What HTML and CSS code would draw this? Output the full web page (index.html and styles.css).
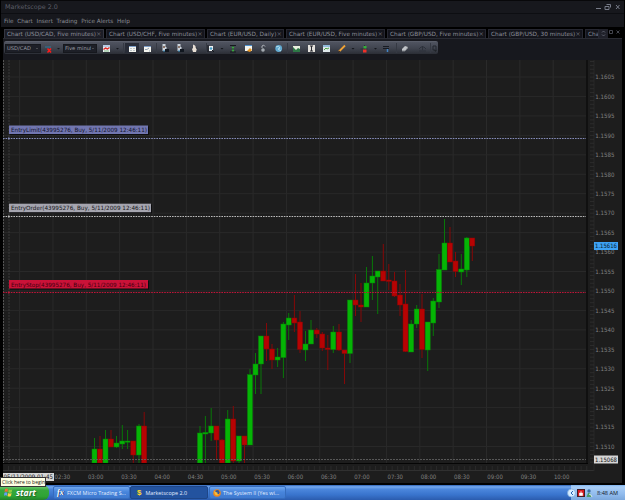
FILE: index.html
```html
<!DOCTYPE html>
<html lang="en">
<head>
<meta charset="utf-8">
<title>Marketscope 2.0</title>
<link rel="stylesheet" href="styles.css">
</head>
<body>
<div class="screen">
  <header class="titlebar"><span class="title">Marketscope 2.0</span>
    <svg class="winbtns" width="26" height="8" viewBox="0 0 26 8"><path d="M1 5.5h5M11.5 1.5h4v3M10 3.5h4v3h-4zM21 2l3.5 4M24.5 2L21 6" fill="none" stroke="#777b88" stroke-width="1"/></svg>
  </header>
  <nav class="menu"><span>File</span><span>Chart</span><span>Insert</span><span>Trading</span><span>Price Alerts</span><span>Help</span></nav>
  <div class="tabs">
    <div class="tab on t1"><span>Chart (USD/CAD, Five minutes)</span><i>×</i></div>
    <div class="tab t2"><span>Chart (USD/CHF, Five minutes)</span><i>×</i></div>
    <div class="tab t3"><span>Chart (EUR/USD, Daily)</span><i>×</i></div>
    <div class="tab t4"><span>Chart (EUR/USD, Five minutes)</span><i>×</i></div>
    <div class="tab t5"><span>Chart (GBP/USD, Five minutes)</span><i>×</i></div>
    <div class="tab t6"><span>Chart (GBP/USD, 30 minutes)</span><i>×</i></div>
    <div class="tab t7"><span>Cha</span></div>
    <svg class="tabbtns" width="24" height="9" viewBox="0 0 24 9"><rect width="9" height="9" fill="#20212a"/><path d="M3 3.5L4.500 2L6 3.5M3 5.500L4.500 7L6 5.500" fill="none" stroke="#686c7a" stroke-width=".8"/><path d="M10.500 1.500h3v3h-3zM17.500 1.500l3 3M20.500 1.500l-3 3" fill="none" stroke="#4b4d57" stroke-width=".9"/></svg>
  </div>
  <div class="toolrow">
    <div class="toolbar">
      <div class="select pair"><span>USD/CAD</span><b></b></div>
      <svg class="remove" width="20" height="12" viewBox="44 41 20 12"><path d="M45 46h6" stroke="#376078" stroke-width="2"/><path d="M47.500 47.500l3.500 4M51 47.500l-3.500 4" stroke="#ff1a1a" stroke-width="1.500"/><path d="M57 47h3l-1.500 1.500z" fill="#15171c"/></svg>
      <div class="select frame"><span>Five minute</span><b></b></div>
      <svg class="icons" width="341" height="12" viewBox="97 41 341 12">
        <path d="M123.500 42v10M156.500 42v10M206.500 42v10M287.500 42v10M396.500 42v10M430.500 42v10" stroke="#353943"/>
        <rect x="125" y="42" width="14" height="10" fill="#282c37"/>
        <g fill="#15171c"><path d="M116 47h3l-1.500 1.500zM220.500 47h3l-1.500 1.500zM351.500 47h3l-1.500 1.500zM374 47h3l-1.500 1.500z"/></g>
        <rect x="103" y="44" width="7" height="7" fill="#e9edf2"/><path d="M103 45h7" stroke="#84a8d2"/><path d="M103.500 48.500l2-1.500 2 1 2-1.500" fill="none" stroke="#e12a24" stroke-width="1.400"/><path d="M104 50h5" stroke="#56ab5a" stroke-width=".7"/>
        <rect x="129" y="45" width="7" height="6" fill="#f4f5f0"/><path d="M129 45.500h7" stroke="#7b9dc8"/><path d="M130 47.500h2m1 0h2M130 49.500h2m1 0h2" stroke="#a3afb6" stroke-width=".7"/>
        <rect x="144" y="45" width="7" height="6" fill="#f4f5f0"/><path d="M144 45.500h7" stroke="#7b9dc8"/><path d="M145 48.500h2l2-1.500m0 3h1" stroke="#7b8fa3" stroke-width=".8" fill="none"/>
        <path d="M162.500 43h3v3h1v4h-4zM177.500 43h3v3h1v4h-4z" fill="#cbd3dc"/><path d="M163 45h2v2h-2zM178 45h2v2h-2z" fill="#8b7569"/><path d="M165 48h4v3h-4zM180 48h4v3h-4z" fill="#111720"/><path d="M163 50h2M178 50h2" stroke="#2d83b4"/>
        <path d="M193 43.500l2 1 1 2 1 .5-1 4h-3l-1-3 1-1z" fill="#e8dfd5"/><path d="M196 46l1 2" stroke="#272b33"/>
        <path d="M208 44v7" stroke="#15171c"/><rect x="209" y="45" width="4" height="5" fill="#edf0f2"/><circle cx="211" cy="47.500" r="1.300" fill="#429bc7"/><path d="M212 49l2 2" stroke="#15171c"/>
        <path d="M230 44.500h6M230 51h6M233 45v6" stroke="#15181d"/><path d="M233 45l1.500 2h-1v2h1l-1.500 2-1.500-2h1v-2h-1z" fill="#3da941"/>
        <rect x="245" y="44" width="7" height="6" fill="#f3f4ef"/><path d="M245 44.500h7" stroke="#4d92d0"/><path d="M247 50l3-3 2 2-2 2z" fill="#e99625"/>
        <circle cx="263" cy="49" r="2.300" fill="#a4aab1" stroke="#30343c"/><path d="M262 47v-2q2-2 3 .5" stroke="#aeb2b8" fill="none"/>
        <circle cx="278.700" cy="47.500" r="3.400" fill="#63abd2"/><path d="M276 46q3-2 4 1l-2 1 3 2" fill="none" stroke="#b2ddec"/>
        <rect x="293" y="45" width="7" height="6" fill="#e9efdf"/><path d="M293 46l3 3 2-2 2 1v3h-7z" fill="#2d7846"/>
        <path d="M308 44h7v7h-7z" fill="#e3e0dc"/><path d="M311.500 45v5M310 45h3M310 50h3" stroke="#262830"/>
        <rect x="323" y="44" width="7" height="7" fill="#dee7eb"/><path d="M323 45h7" stroke="#438cc6"/><path d="M324 49l2-2 1 1 2-1" stroke="#52a646" fill="none"/>
        <path d="M339 50.500l6-6" stroke="#f0a235" stroke-width="1.800"/><path d="M338.500 51l1.500-1" stroke="#291d18"/>
        <path d="M360.500 48h7M364.500 44v7" stroke="#2b3038"/><rect x="363.500" y="45" width="3" height="2.500" fill="#36ad3a"/><rect x="363" y="48.500" width="3.500" height="3" fill="#ef3028"/>
        <path d="M383 45.500h6M383 47.500h3M386 47.500h3" stroke="#171b23"/><path d="M387.500 48v3" stroke="#4285c6" stroke-width="1.500"/>
        <path d="M402 48l3-3 3 1-3 4h-3z" fill="#c1c4c8"/><path d="M402 50l3 0 3-3" stroke="#777b82" fill="none"/>
        <path d="M419 48l2-2h3l2 2M419 50h7M422.500 45v4" stroke="#2d313b" fill="none"/>
        <path d="M433 45h3v4M433 45v4h2" stroke="#23262e" fill="none"/><path d="M434 49h3l-1.500 2z" fill="#202329"/>
      </svg>
    </div>
  </div>
  <main class="chart">
    <svg id="plot" width="619" height="423" viewBox="3 60 619 423" font-family="DejaVu Sans, sans-serif"></svg>
  </main>
  <footer class="taskbar">
    <div class="start"><svg width="9" height="9" viewBox="0 0 9 9"><path d="M1 1q2-1 3 0L3.500 4q-1.500-1-3 0z" fill="#f26b37"/><path d="M4.700 1.300q2 1 3.600 0l-.6 3q-2 1-3.500 0z" fill="#8ccc3f"/><path d="M.4 4.700q1.500-1 3 0l-.6 3q-1.500-1-2.800 0z" fill="#629ff4"/><path d="M4.100 5q1.500 1 3.500 0L7 8q-2 1-3.500 0z" fill="#fbd146"/></svg><span>start</span></div>
    <div class="task a"><em class="fx">fx</em><span>FXCM Micro Trading S...</span></div>
    <div class="task b"><em class="dollar">$</em><span>Marketscope 2.0</span></div>
    <div class="task c"><svg width="8" height="8" viewBox="0 0 8 8"><circle cx="4" cy="4" r="3.800" fill="#ef851d"/><circle cx="4.300" cy="3.300" r="2.200" fill="#31599d"/><path d="M1 2l2 1 2 1-1 1 2 .5-2 1-2-1z" fill="#f7bd3a"/></svg><span>The System II (Yes wi...</span></div>
    <div class="tray"><svg width="26" height="10" viewBox="570 487 26 10"><circle cx="571.500" cy="492" r="4" fill="#d6ecff" stroke="#7ba9dd" stroke-width=".7"/><path d="M573 490l-2 2 2 2" fill="none" stroke="#2463b3"/><rect x="577.500" y="488.500" width="7" height="7" fill="#d71920" stroke="#421c24"/><path d="M581 490v2M579.500 492h3v2.500h-3z" stroke="#fff" fill="#fff" stroke-width=".6"/><circle cx="589" cy="490" r="1.700" fill="#3a6ea5"/><path d="M586.500 496l1.500-4h2l2 4z" fill="#4a9a69"/><path d="M589 493l2 1 1 2" stroke="#d9e9f2" fill="none"/></svg><time>8:48 AM</time></div>
  </footer>
  <div class="tooltip">Click here to begin</div>
</div>
<script src="chart.js"></script>
</body>
</html>
```
FILE: styles.css
```css
* { box-sizing: border-box; }
body { margin: 0; background: #000; overflow: hidden; }
.screen { position: relative; width: 625px; height: 500px; display: flex; flex-direction: column; font: 6px/8px "DejaVu Sans", sans-serif; color: #7d808b; white-space: nowrap; }
.titlebar { height: 14px; margin: 0 1px; border-top: 1px solid #08080a; border-bottom: 1px solid #0d0e12; background: #17181d; display: flex; align-items: center; justify-content: space-between; padding: 0 1px 0 4px; color: #5b5d66; }
.title { font-size: 6.4px; }
.winbtns { margin-right: 2px; }
.menu { height: 13px; margin: 0 1px; background: #17181d; display: flex; align-items: center; gap: 3.7px; padding-left: 3px; font-size: 5.7px; color: #8a8c94; }
.tabs { height: 11px; display: flex; gap: 2px; margin: 0 3px 0 4px; padding-top: 2px; overflow: hidden; }
.tab { flex: none; height: 9px; display: flex; justify-content: space-between; align-items: center; padding: 0 2px; border: 1px solid #262731; border-bottom: 0; background: #14151c; font-size: 5.75px; color: #8b8d98; }
.tab.on { background: #1c1d26; border-color: #343641; }
.tab i { font-style: normal; font-size: 6.5px; color: #62646f; }
.t1 { width: 100px; }
.t2 { width: 99px; }
.t3 { width: 77px; }
.t4 { width: 99px; }
.t5 { width: 99px; }
.t6 { width: 95px; }
.t7 { width: 14px; padding-right: 0; margin-right: -2px; overflow: hidden; }
.tabbtns { flex: none; }
.toolrow { height: 22px; margin: 0 3px; border-top: 1px solid #292b33; padding: 2px 0 0 1px; background: #17181e; }
.toolbar { width: 434px; height: 13px; display: flex; align-items: center; border-radius: 2px; border-top: 1px solid #5a5e6a; background: linear-gradient(#505460, #414550 50%, #2b2e36); }
.select { height: 9px; display: flex; align-items: center; justify-content: space-between; padding: 0 2px 0 1px; border: 1px solid #16181e; background: #1d1f27; font-size: 5.2px; color: #999ba3; overflow: hidden; }
.select b { flex: none; border: 1.5px solid transparent; border-top-color: #777; border-bottom: 0; }
.select span { overflow: hidden; }
.pair { width: 36px; margin: 0 3px 0 1px; }
.frame { width: 34px; margin-left: -1px; }
.frame span { width: 26px; }
.remove { flex: none; }
.icons { flex: none; }
.chart { height: 423px; margin: 0 3px; background: #1d1d1d; }
.chart svg { display: block; }
.taskbar { margin-top: 2px; height: 15px; display: flex; align-items: stretch; background: linear-gradient(#2c61b5, #75a9ee 12%, #4c87dc 28%, #3974cd 65%, #2b5cae); color: #e4efff; }
.start { width: 49px; padding-left: 4px; display: flex; align-items: center; gap: 3px; background: linear-gradient(#2a7d32, #64c566 14%, #36a63c 35%, #2ea434 75%, #22802a); border-radius: 0 6px 6px 0; font: italic bold 8.6px/12px "Open Sans", sans-serif; color: #fff; text-shadow: 1px 1px 1px #246129; }
.task { height: 13px; margin-top: 1px; display: flex; align-items: center; gap: 2px; padding-left: 3px; border: 1px solid #356cbd; border-radius: 2px; background: linear-gradient(#6fa6ee, #4785dc 45%, #3e79cf); font: 5.4px/8px "Open Sans", sans-serif; }
.task.a { width: 77px; margin-left: 4px; }
.task.b { width: 78px; padding-left: 6px; background: #23539f; border-color: #1e4688; }
.task.c { width: 77px; margin-left: 1px; }
.task em { font: italic bold 8px/9px "Liberation Serif", serif; }
.task .fx { color: #fff; width: 8px; text-shadow: 1px 0 #1f3c70; }
.task .dollar { color: #ffdc28; font: bold 8px/9px "Liberation Sans", sans-serif; margin-right: 2px; }
.tray { margin-left: auto; width: 54px; display: flex; align-items: center; gap: 1px; background: linear-gradient(#7db1ee, #a9cef6 12%, #91bcee 60%, #7ca8dc); color: #111827; font: 5.6px/8px "Open Sans", sans-serif; }
.tray svg { overflow: visible; flex: none; margin-left: -1px; }
.tooltip { position: absolute; left: 0; top: 477px; width: 46px; height: 10px; padding-left: 1px; border: 1px solid #333; background: #ffffe4; color: #16160e; font: 5px/8px "Open Sans", sans-serif; overflow: hidden; }
```
FILE: chart.js
```js
const plot = document.getElementById("plot");
const parts = [];
const rect = (x, y, w, h, fill, extra = "") => parts.push(`<rect x="${x}" y="${y}" width="${w}" height="${h}" fill="${fill}" ${extra}/>`);
const line = (x1, y1, x2, y2, stroke, extra = "") => parts.push(`<path d="M${x1} ${y1}L${x2} ${y2}" stroke="${stroke}" ${extra}/>`);
const text = (x, y, width, fill, size, label) => parts.push(`<text x="${x}" y="${y}" textLength="${width}" lengthAdjust="spacingAndGlyphs" fill="${fill}" font-size="${size}">${label}</text>`);

// Price and time grid
for (let i = 0; i <= 16; i++) line(19.6 + i * 33.35, 60, 19.6 + i * 33.35, 463, "#2a2a2a");
for (let i = 0; i < 20; i++) line(3, 77 + i * 19.45, 586, 77 + i * 19.45, "#292929");

// [centre x, body top, body bottom, wick top, wick bottom, rising]
const candles = [
  [94.5,449,463,438,463,1],[100,449,463,436,463,0],[105.5,439,463,430,463,1],[111,439,447,430,447,0],[116.5,443,447,436,448,1],
  [122.3,441,444,425,449,1],[127.6,441,442,430,449,1],[133.3,441,455,441,463,0],[139,426,455,424,463,1],[144.2,426,463,412,463,0],
  [200,433,463,426,463,1],[205.4,432.4,434,416,463,1],[211.2,426,433,408,441,1],[216.5,426,440,426,460,0],[222,440,463,439,463,0],
  [227.7,419,463,410,463,1],[233.3,419,461,406,463,0],[239,436,461,436,463,1],[244.5,436,445,436,463,0],[250,374.7,445,369,445,1],
  [255.5,364,375,353,394,1],[261,336,364,336,394,1],[266.5,336,349,323,361,0],[272,349,360,344,369,0],[277.6,357,360,348,367,1],
  [283.4,324,357.5,322,378,1],[288.7,318,325,313,340,1],[294.4,318,323,295,332,0],[300,322,349.4,311,353,0],[305.5,344,350,331,361,1],
  [311,330,344,320,344,1],[316.8,330,334,328,338,0],[322.3,334,348,332,351,0],[327.8,348,349.5,335,370,0],[333.3,332,349.5,326,353,1],
  [339,332,350,324,351,0],[344.5,350,353.5,350,384,0],[350,300,353.5,300,363,1],[355.5,300,305,274,316,0],[361,305,307,283,322,0],
  [366.5,283,307,267,307,1],[372.4,276,283,256,300,1],[377.7,271,277,271,314,1],[383.3,271,281,244,281,0],[388.8,280,281.4,264,290,0],
  [394.5,281,296,272,297,0],[400,295,305,284,316,0],[405.5,304,351.5,270,352,0],[411.2,324,352,320,352,1],[416.7,309,324,305,328,1],
  [422,309,349.5,294,358,0],[427.7,322,350,322,371,1],[433.3,301,323,298,336,1],[439,269.5,302,254,308,1],[444.5,243,270,219,270,1],
  [450,243,262,227,262,0],[455.5,261,271.5,252,277,0],[461.3,269,272,254,285,1],[466.8,238,270,237,277,1],[472.3,238,246,238,261,0]
];
for (const [x, top, bottom, high, low, up] of candles) {
  rect(x - .5, high, 1, low - high, up ? "#087808" : "#850808");
  rect(x - 2.5, top, 5, Math.max(1.2, bottom - top), up ? "#05b405" : "#b70303", `stroke="${up ? "#078407" : "#8c0505"}" stroke-width=".5"`);
}

// Order levels, session edges and last bid
line(3.5, 60, 3.5, 463, "#555", 'stroke-dasharray="2 1"');
line(9, 60, 9, 463, "#3b3b3b", 'stroke-dasharray="2 1"');
const levels = [
  [138.5, 125.5, 139, 137, "#7176b0", "#858cb9", "#12132d", "EntryLimit(43995276, Buy, 5/11/2009 12:46:11)"],
  [216.5, 203.7, 142, 140, "#a5a5af", "#bbb", "#15151a", "EntryOrder(43995276, Buy, 5/11/2009 12:46:11)"],
  [292.5, 280, 139, 136, "#ca1238", "#bd1639", "#44000f", "EntryStop(43995276, Buy, 5/11/2009 12:46:11)"]
];
for (const [y, top, width, length, fill, stroke, ink, label] of levels) {
  line(3, y, 586, y, stroke, 'stroke-dasharray="1.6 1"');
  rect(10, top + 1, width, 8.5, "#0c0c0e");
  rect(9, top, width, 8.5, fill);
  text(11, top + 6.6, length - 1, ink, 5.8, label);
  rect(8, y - 1, 1.5, 2, stroke);
}
line(3, 459.5, 586, 459.5, "#666", 'stroke-dasharray="2 1" stroke-width=".8"');

// Axes
line(3, 463.5, 588, 463.5, "#050505");
line(587, 60, 587, 464, "#050505");
line(3, 470.5, 594, 470.5, "#303030");
line(594, 60, 594, 471, "#292929");
for (let x = 8.5; x < 587; x += 5.56) line(x, 466, x, 470, "#303030", 'stroke-width=".7"');
for (let y = 61.5; y < 463; y += 3.89) line(590, y, 594, y, "#323232", 'stroke-width=".7"');
for (let i = 0; i < 20; i++) text(595.2, 79.3 + i * 19.45, 19.2, "#808080", 6, (1.1605 - i * .0005).toFixed(4));
for (let i = 0; i < 16; i++) {
  const minutes = 150 + i * 30;
  const label = String(Math.floor(minutes / 60)).padStart(2, "0") + ":" + String(minutes % 60).padStart(2, "0");
  text(54.6 + i * 33.29, 478.8, 15.5, "#808080", 6, label);
}
rect(594, 242, 24, 8, "#3da2f5");
text(595, 248.2, 22, "#071b2b", 6, "1.15616");
rect(594, 455.5, 24, 8, "#d6d6d6");
text(595, 461.7, 22, "#111", 6, "1.15068");
rect(3, 473, 51, 8, "#d6d6d6");
text(3.5, 479.1, 49.5, "#111", 6.2, "05/11/2009 01:45");
plot.innerHTML = parts.join("");
```
